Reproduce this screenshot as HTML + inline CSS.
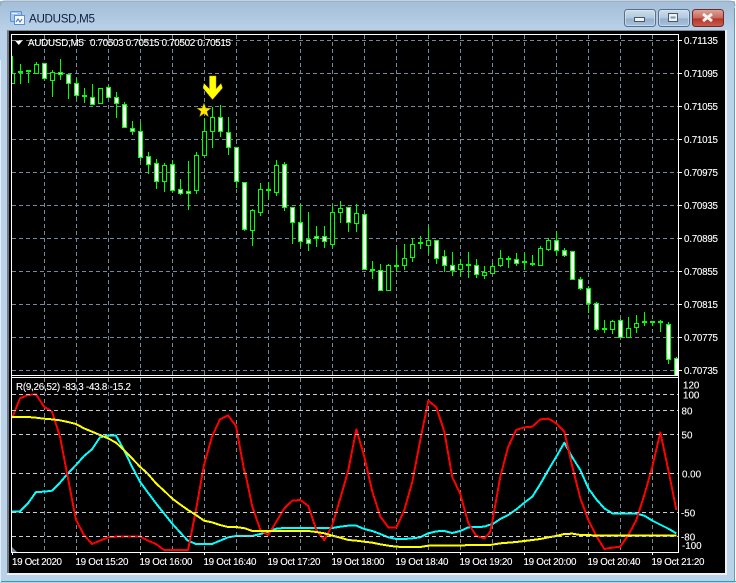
<!DOCTYPE html>
<html><head><meta charset="utf-8"><title>AUDUSD,M5</title>
<style>
html,body{margin:0;padding:0;width:736px;height:583px;overflow:hidden;background:#fff}
svg{display:block}
text{font-family:"Liberation Sans",sans-serif;font-size:9.8px;fill:#fff;stroke:#fff;stroke-width:.12}
</style></head><body>
<svg width="736" height="583" viewBox="0 0 736 583" xmlns="http://www.w3.org/2000/svg">
<defs>
<linearGradient id="tb" x1="0" y1="0" x2="0" y2="1"><stop offset="0" stop-color="#a3bdd7"/><stop offset="1" stop-color="#bbd3ea"/></linearGradient>
<linearGradient id="bt" x1="0" y1="0" x2="0" y2="1"><stop offset="0" stop-color="#cfdeec"/><stop offset=".5" stop-color="#b2c8de"/><stop offset=".55" stop-color="#94b0cc"/><stop offset="1" stop-color="#a9c3dc"/></linearGradient>
<linearGradient id="cl" x1="0" y1="0" x2="0" y2="1"><stop offset="0" stop-color="#dfa59b"/><stop offset=".5" stop-color="#c9685a"/><stop offset=".55" stop-color="#b5352a"/><stop offset="1" stop-color="#c8604f"/></linearGradient>
<clipPath id="cp"><rect x="12" y="35" width="666" height="340"/></clipPath>
<clipPath id="ci"><rect x="12" y="378" width="666" height="174"/></clipPath>
</defs>

<!-- window frame -->
<path d="M0 583V5Q0 1 5 1H729Q735 1 735 6V583Z" fill="#b9d2ea"/>
<rect x="0" y="1" width="735" height="32" fill="url(#tb)"/>
<path d="M0 6Q0 1 5 1H729Q735 1 735 6" fill="none" stroke="#8ea6bd"/>
<rect x="0" y="581" width="736" height="1" fill="#2d9fae"/>
<rect x="734" y="8" width="1" height="574" fill="#5f9fb0"/>
<rect x="0" y="60" width="1" height="522" fill="#e3edf6"/>
<rect x="7" y="30" width="720" height="545" fill="#f0f0f0"/>
<rect x="7" y="30" width="2" height="543" fill="#6f7780"/>
<rect x="7" y="30" width="718" height="1" fill="#7d8a96"/>
<rect x="9" y="31" width="716" height="542" fill="#000"/>

<!-- icon -->
<g>
<rect x="10.5" y="11.5" width="11" height="10" rx="1" fill="#a9c6ea" stroke="#5b8fd0"/>
<rect x="14.5" y="15.5" width="10" height="9" fill="#f4f8fd" stroke="#5b8fd0"/>
<path d="M16 22l2-3 2 3 2-3" fill="none" stroke="#3a6fb5"/>
<rect x="12" y="13" width="5" height="1" fill="#eef4fb"/>
</g>
<text x="29" y="22.5" textLength="66" style="font-size:11.6px;fill:#0d1f3c;stroke:none">AUDUSD,M5</text>

<!-- buttons -->
<rect x="624.5" y="9.5" width="31" height="17" rx="3" fill="url(#bt)" stroke="#54708c"/>
<rect x="625.5" y="10.5" width="29" height="15" rx="2" fill="none" stroke="#dce8f3" stroke-opacity=".6"/>
<rect x="634.5" y="17.5" width="10" height="4" fill="#eef3f8" stroke="#46586c"/>
<rect x="658.5" y="9.5" width="31" height="17" rx="3" fill="url(#bt)" stroke="#54708c"/>
<rect x="659.5" y="10.5" width="29" height="15" rx="2" fill="none" stroke="#dce8f3" stroke-opacity=".6"/>
<rect x="668.5" y="13.5" width="9" height="8" fill="#eef3f8" stroke="#46586c"/>
<rect x="670.5" y="16.5" width="5" height="2" fill="#7f93a8"/>
<rect x="692.5" y="9.5" width="31" height="17" rx="3" fill="url(#cl)" stroke="#6e2a2a"/>
<path d="M703 14l9 7M712 14l-9 7" stroke="#f4f4f4" stroke-width="3" fill="none"/>

<!-- main chart grid -->
<g stroke="#778899" stroke-width="1" stroke-dasharray="4 3" fill="none" shape-rendering="crispEdges">
<path d="M12 40.5H678M12 73.5H678M12 106.5H678M12 139.5H678M12 172.5H678M12 205.5H678M12 238.5H678M12 271.5H678M12 304.5H678M12 337.5H678M12 370.5H678"/>
<path d="M44.5 35V375M76.5 35V375M108.5 35V375M140.5 35V375M172.5 35V375M204.5 35V375M236.5 35V375M268.5 35V375M300.5 35V375M332.5 35V375M364.5 35V375M396.5 35V375M428.5 35V375M460.5 35V375M492.5 35V375M524.5 35V375M556.5 35V375M588.5 35V375M620.5 35V375M652.5 35V375"/>
<path d="M44.5 378V552M76.5 378V552M108.5 378V552M140.5 378V552M172.5 378V552M204.5 378V552M236.5 378V552M268.5 378V552M300.5 378V552M332.5 378V552M364.5 378V552M396.5 378V552M428.5 378V552M460.5 378V552M492.5 378V552M524.5 378V552M556.5 378V552M588.5 378V552M620.5 378V552M652.5 378V552"/>
</g>

<!-- candles -->
<g clip-path="url(#cp)" shape-rendering="crispEdges" stroke="#00ff00" stroke-width="1">
<path fill="none" d="M12.5 56V83M20.5 64V84M28.5 70V83M36.5 62V73M44.5 63V79M52.5 70V97M60.5 59V80M68.5 74V99M76.5 78V98M84.5 88V103M92.5 84V105M100.5 88V104M108.5 86V98M116.5 92V118M124.5 102V128M132.5 121V135M140.5 123V161M148.5 152V174M156.5 159V189M164.5 163V192M172.5 160V192M180.5 179V195M188.5 161V210M196.5 152V194M204.5 118V155M212.5 107V148M220.5 105V137M228.5 117V155M236.5 147V188M244.5 182V231M252.5 209V246M260.5 183V216M268.5 182V199M276.5 160V196M284.5 162V211M292.5 207V244M300.5 204V247M308.5 212V251M316.5 226V247M324.5 226V248M332.5 205V247M340.5 201V223M348.5 207V232M356.5 204V232M364.5 213V270M372.5 261V279M380.5 264V290M388.5 264V290M396.5 249V272M404.5 244V270M412.5 238V262M420.5 236V249M428.5 226V254M436.5 240V264M444.5 250V272M452.5 252V276M460.5 259V277M468.5 252V278M476.5 259V278M484.5 266V279M492.5 263V274M500.5 250V267M508.5 256V268M516.5 253V266M524.5 253V270M532.5 255V266M540.5 246V266M548.5 238V251M556.5 231V256M564.5 248V257M572.5 251V280M580.5 277V290M588.5 286V313M596.5 302V331M604.5 320V333M612.5 320V334M620.5 319V338M628.5 317V338M636.5 315V333M644.5 312V326M652.5 321V326M660.5 320V332M668.5 322V364M676.5 357V374"/>
<path fill="#fff" d="M42.5 63.5h4V78.5h-4zM58.5 72.5h4V74.5h-4zM66.5 74.5h4V83.5h-4zM74.5 83.5h4V95.5h-4zM90.5 97.5h4V104.5h-4zM106.5 87.5h4V97.5h-4zM114.5 97.5h4V103.5h-4zM122.5 104.5h4V127.5h-4zM130.5 128.5h4V131.5h-4zM138.5 131.5h4V157.5h-4zM146.5 156.5h4V164.5h-4zM154.5 163.5h4V181.5h-4zM170.5 164.5h4V190.5h-4zM178.5 189.5h4V193.5h-4zM186.5 191.5h4V193.5h-4zM218.5 117.5h4V131.5h-4zM226.5 132.5h4V147.5h-4zM234.5 147.5h4V181.5h-4zM242.5 182.5h4V229.5h-4zM282.5 164.5h4V207.5h-4zM290.5 207.5h4V222.5h-4zM298.5 222.5h4V241.5h-4zM306.5 239.5h4V243.5h-4zM314.5 236.5h4V238.5h-4zM322.5 236.5h4V241.5h-4zM346.5 207.5h4V222.5h-4zM362.5 214.5h4V269.5h-4zM378.5 270.5h4V290.5h-4zM434.5 240.5h4V258.5h-4zM442.5 256.5h4V265.5h-4zM450.5 265.5h4V270.5h-4zM474.5 265.5h4V274.5h-4zM514.5 259.5h4V263.5h-4zM554.5 240.5h4V250.5h-4zM562.5 250.5h4V255.5h-4zM570.5 251.5h4V279.5h-4zM578.5 279.5h4V288.5h-4zM586.5 288.5h4V303.5h-4zM594.5 303.5h4V329.5h-4zM618.5 320.5h4V337.5h-4zM666.5 324.5h4V359.5h-4zM674.5 358.5h4V376h-4z"/>
<path fill="#000" d="M10.5 73.5h4V83.5h-4zM34.5 64.5h4V73.5h-4zM50.5 72.5h4V80.5h-4zM98.5 88.5h4V103.5h-4zM162.5 165.5h4V181.5h-4zM194.5 155.5h4V190.5h-4zM202.5 131.5h4V155.5h-4zM210.5 117.5h4V131.5h-4zM250.5 210.5h4V230.5h-4zM258.5 189.5h4V212.5h-4zM274.5 165.5h4V192.5h-4zM330.5 212.5h4V244.5h-4zM338.5 208.5h4V212.5h-4zM354.5 213.5h4V223.5h-4zM386.5 265.5h4V290.5h-4zM402.5 258.5h4V265.5h-4zM410.5 244.5h4V257.5h-4zM426.5 240.5h4V245.5h-4zM458.5 264.5h4V269.5h-4zM482.5 272.5h4V275.5h-4zM490.5 266.5h4V273.5h-4zM498.5 258.5h4V265.5h-4zM538.5 248.5h4V265.5h-4zM546.5 240.5h4V249.5h-4zM610.5 321.5h4V329.5h-4zM626.5 328.5h4V337.5h-4zM634.5 323.5h4V327.5h-4z"/>
<path fill="none" stroke-width="2" d="M18 72h5M26 71h5M82 96h5M266 190h5M370 270h5M394 266h5M418 243h5M466 265h5M506 259h5M522 262h5M530 264h5M602 329h5M642 322h5M650 322h5M658 322h5"/>
</g>

<!-- arrow + star -->
<polygon points="209.5,76 216,76 216,89 221,83.5 222.5,88 212.5,99.5 203,88 204,83.5 209.5,89" fill="#ffff00" stroke="#b8b000" stroke-width=".5"/>
<polygon points="204,103 205.8,108.1 211.1,108.2 206.9,111.4 208.4,116.6 204,113.5 199.6,116.6 201.1,111.4 196.9,108.2 202.2,108.1" fill="#ffe800" stroke="#9a8a00" stroke-width=".4"/>

<!-- indicator lines -->
<g clip-path="url(#ci)" fill="none" stroke-width="6" stroke-linejoin="round" shape-rendering="crispEdges">
<g stroke="#00ffff">
<polyline transform="translate(0,370) scale(.33333)" points="36,424 60,424 84,400 108,366 132,365 156,362 180,338 204,310 228,285 252,258 276,238 300,202 324,197 348,197 372,240 396,290 420,335 444,368 468,400 492,430 516,460 540,487 564,512 588,522 612,522 636,522 660,512 684,502 708,498 735,498"/>
<polyline transform="translate(245,370) scale(.33333)" points="0,498 22,498 46,492 70,485 94,476 118,474 262,474 286,470 310,467 334,467 358,477 382,483 406,492 430,502 454,507 478,507 502,505 526,502 550,490 574,484 598,483 622,489 646,483 670,472 694,471 718,470 735,464"/>
<polyline transform="translate(490,370) scale(.33333)" points="0,464 7,463 31,447 55,435 79,418 103,398 127,380 151,342 175,300 199,260 223,218 247,262 271,300 295,355 319,388 343,415 367,430 391,431 439,431 463,437 487,452 511,464 535,476 559,490"/>
</g>
<g stroke="#ff0000">
<polyline transform="translate(0,370) scale(.33333)" points="36,145 60,85 84,75 108,73 132,110 156,125 180,200 204,325 228,450 252,495 276,522 300,512 324,502 348,500 420,500 444,512 468,522 492,540 564,540 588,420 612,285 636,200 660,148 684,136 708,168 735,315"/>
<polyline transform="translate(245,370) scale(.33333)" points="0,305 22,410 46,480 70,495 94,455 118,415 142,392 166,390 190,408 214,480 238,510 262,465 286,385 310,300 334,178 358,260 382,365 406,440 430,472 454,473 478,420 502,335 526,210 550,92 574,112 598,185 622,322 646,372 670,460 694,498 718,505 735,487"/>
<polyline transform="translate(490,370) scale(.33333)" points="0,487 7,455 31,320 54,232 78,180 103,172 127,170 151,148 175,146 199,160 223,185 247,290 271,385 295,450 319,498 343,537 367,533 391,530 415,495 439,450 463,375 487,290 511,187 535,300 559,420"/>
</g>
<g stroke="#ffff00">
<polyline transform="translate(0,370) scale(.33333)" points="36,141 84,141 108,143 132,146 156,148 180,151 204,156 228,162 252,175 276,185 300,195 324,205 348,218 372,240 396,265 420,290 444,312 468,340 492,362 516,385 540,403 564,420 588,435 612,452 636,457 660,465 684,471 708,471 735,475"/>
<polyline transform="translate(245,370) scale(.33333)" points="0,475 22,483 190,483 214,486 238,490 262,497 286,503 310,510 334,512 358,515 382,518 406,523 430,527 454,530 478,531 526,531 550,527 646,527 670,525 735,525"/>
<polyline transform="translate(490,370) scale(.33333)" points="0,525 31,520 55,518 79,516 103,513 127,510 151,507 175,502 199,498 223,492 247,491 271,495 295,495 319,497 559,497"/>
</g>
</g>

<!-- indicator levels -->
<path d="M12 394.5H678M12 410.5H678M12 434.5H678M12 473.5H678M12 512.5H678M12 536.5H678" stroke="#c8ccd0" stroke-dasharray="4 3" shape-rendering="crispEdges" fill="none"/>
<polygon points="12,547 12,552 17,552" fill="#778899"/>

<!-- frames -->
<g stroke="#fff" fill="none" shape-rendering="crispEdges">
<path d="M11.5 34.5H678.5V552.5H11.5ZM11.5 375.5H678.5M11.5 377.5H678.5"/>
<path d="M678 40.5h4M678 73.5h4M678 106.5h4M678 139.5h4M678 172.5h4M678 205.5h4M678 238.5h4M678 271.5h4M678 304.5h4M678 337.5h4M678 370.5h4"/>
<path d="M12.5 552v3M76.5 552v3M140.5 552v3M204.5 552v3M268.5 552v3M332.5 552v3M396.5 552v3M460.5 552v3M524.5 552v3M588.5 552v3M652.5 552v3"/>
</g>

<!-- header text -->
<polygon points="15,40.5 22.5,40.5 18.75,45" fill="#fff"/>
<text x="28" y="46" textLength="56">AUDUSD,M5</text>
<text x="90" y="46" textLength="141">0.70503 0.70515 0.70502 0.70515</text>
<text x="16" y="390" textLength="115">R(9,26,52) -83,3 -43.8 -15.2</text>

<!-- price axis -->
<g>
<text x="684" y="44" textLength="34">0.71135</text>
<text x="684" y="77" textLength="34">0.71095</text>
<text x="684" y="110" textLength="34">0.71055</text>
<text x="684" y="143" textLength="34">0.71015</text>
<text x="684" y="176" textLength="34">0.70975</text>
<text x="684" y="209" textLength="34">0.70935</text>
<text x="684" y="242" textLength="34">0.70895</text>
<text x="684" y="275" textLength="34">0.70855</text>
<text x="684" y="308" textLength="34">0.70815</text>
<text x="684" y="341" textLength="34">0.70775</text>
<text x="684" y="374" textLength="34">0.70735</text>
<text x="683" y="388.5">120</text>
<text x="683" y="398.5">100</text>
<text x="681.5" y="414.5">80</text>
<text x="681.5" y="438.5">50</text>
<text x="682" y="477.5">0.00</text>
<text x="681" y="516.5">-50</text>
<text x="681" y="540.5">-80</text>
<text x="682" y="549">-100</text>
</g>

<!-- time axis -->
<text x="12" y="565" textLength="50">19 Oct 2020</text>
<text x="75.5" y="565" textLength="53">19 Oct 15:20</text>
<text x="139.5" y="565" textLength="53">19 Oct 16:00</text>
<text x="203.5" y="565" textLength="53">19 Oct 16:40</text>
<text x="267.5" y="565" textLength="53">19 Oct 17:20</text>
<text x="331.5" y="565" textLength="53">19 Oct 18:00</text>
<text x="395.5" y="565" textLength="53">19 Oct 18:40</text>
<text x="459.5" y="565" textLength="53">19 Oct 19:20</text>
<text x="523.5" y="565" textLength="53">19 Oct 20:00</text>
<text x="587.5" y="565" textLength="53">19 Oct 20:40</text>
<text x="651.5" y="565" textLength="53">19 Oct 21:20</text>
</svg>
</body></html>
